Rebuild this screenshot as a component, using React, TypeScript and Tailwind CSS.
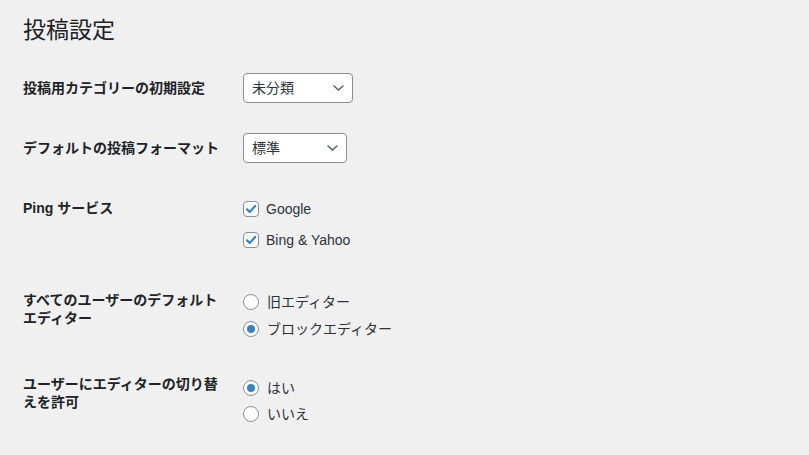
import type { ReactNode } from 'react';

const font = { fontFamily: '"Liberation Sans", "Noto Sans CJK JP", sans-serif' };

function Chevron() {
  return (
    <svg width="11" height="6" viewBox="0 0 11 6" fill="none" className="absolute right-[8px] top-1/2 -translate-y-1/2">
      <path d="M1 1l4.5 4 4.5-4" stroke="#50575e" strokeWidth="1.4" strokeLinecap="round" strokeLinejoin="round" />
    </svg>
  );
}

function Select({ value, width }: { value: string; width: string }) {
  return (
    <div className={`relative flex h-[30px] items-center rounded-[4px] border border-[#8c8f94] bg-white pl-[8px] text-[14px] text-[#2c3338] ${width}`}>
      {value}
      <Chevron />
    </div>
  );
}

function Checkbox({ label }: { label: string }) {
  return (
    <div className="flex h-[22px] items-center">
      <span className="flex h-[16px] w-[16px] items-center justify-center rounded-[4px] border border-[#8c8f94] bg-white">
        <svg width="12" height="12" viewBox="0 0 12 12" fill="none">
          <path d="M2 6.3l2.7 2.7L10.2 3" stroke="#3582c4" strokeWidth="2.2" strokeLinecap="round" strokeLinejoin="round" />
        </svg>
      </span>
      <span className="ml-[7px] text-[14px] text-[#2c3338]">{label}</span>
    </div>
  );
}

function Radio({ label, checked }: { label: string; checked?: boolean }) {
  return (
    <div className="flex h-[22px] items-center">
      <span className="flex h-[16px] w-[16px] items-center justify-center rounded-full border border-[#8c8f94] bg-white">
        {checked && <span className="h-[8px] w-[8px] rounded-full bg-[#3582c4]" />}
      </span>
      <span className="ml-[8px] text-[14px] text-[#2c3338]">{label}</span>
    </div>
  );
}

function Row({ label, children, className }: { label: ReactNode; children: ReactNode; className: string }) {
  return (
    <div className={`flex ${className}`}>
      <div className="w-[220px] shrink-0 whitespace-nowrap text-[14px] font-bold leading-[18px] text-[#1d2327]">{label}</div>
      <div>{children}</div>
    </div>
  );
}

export default function App() {
  return (
    <div className="h-[455px] w-[809px] overflow-hidden bg-[#f0f0f1] px-[23px] pt-[16px]" style={font}>
      <h1 className="text-[23px] font-normal leading-[29px] text-[#1d2327]">投稿設定</h1>

      {/* Selects */}
      <Row label="投稿用カテゴリーの初期設定" className="mt-[28px] items-center">
        <Select value="未分類" width="w-[110px]" />
      </Row>
      <Row label="デフォルトの投稿フォーマット" className="mt-[30px] items-center">
        <Select value="標準" width="w-[104px]" />
      </Row>

      {/* Ping */}
      <Row label="Ping サービス" className="mt-[36px] items-start">
        <div className="-mt-px flex flex-col gap-[9px]">
          <Checkbox label="Google" />
          <Checkbox label="Bing & Yahoo" />
        </div>
      </Row>

      {/* Editor */}
      <Row
        label={
          <>
            すべてのユーザーのデフォルト
            <br />
            エディター
          </>
        }
        className="mt-[40px] items-start"
      >
        <div className="flex flex-col gap-[5px]">
          <Radio label="旧エディター" />
          <Radio label="ブロックエディター" checked />
        </div>
      </Row>
      <Row
        label={
          <>
            ユーザーにエディターの切り替
            <br />
            えを許可
          </>
        }
        className="mt-[35px] items-start"
      >
        <div className="pt-[2px] flex flex-col gap-[4px]">
          <Radio label="はい" checked />
          <Radio label="いいえ" />
        </div>
      </Row>
    </div>
  );
}
